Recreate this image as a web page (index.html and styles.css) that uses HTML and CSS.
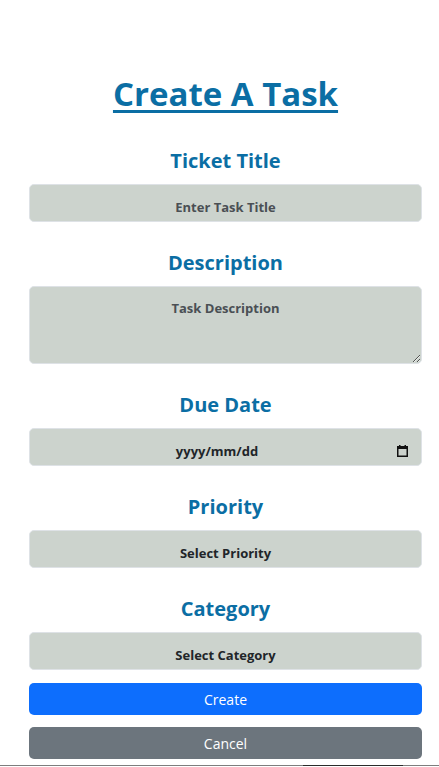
FILE: index.html
```html
<!DOCTYPE html>
<html lang="en">
<head>
<meta charset="utf-8">
<title>Create A Task</title>
<link rel="stylesheet" href="styles.css">
</head>
<body>
<main class="page">
  <h1 class="page-title">Create A Task</h1>
  <form class="task-form">
    <div class="field">
      <label class="field-label" for="title">Ticket Title</label>
      <input class="control" id="title" type="text" placeholder="Enter Task Title">
    </div>
    <div class="field">
      <label class="field-label" for="desc">Description</label>
      <textarea class="control control-area" id="desc" placeholder="Task Description"></textarea>
    </div>
    <div class="field">
      <label class="field-label" for="due">Due Date</label>
      <div class="date-wrap">
        <input class="control control-date" id="due" type="text" placeholder="yyyy/mm/dd">
        <svg class="date-icon" width="11" height="12" viewBox="0 0 11 12" aria-hidden="true">
          <rect x="2" y="0" width="1.5" height="2" fill="#111"/>
          <rect x="7.5" y="0" width="1.5" height="2" fill="#111"/>
          <rect x="0.75" y="1.75" width="9.5" height="9.5" fill="none" stroke="#111" stroke-width="1.5"/>
          <rect x="0" y="1" width="11" height="3" fill="#111"/>
        </svg>
      </div>
    </div>
    <div class="field">
      <label class="field-label" for="priority">Priority</label>
      <select class="control control-select" id="priority">
        <option>Select Priority</option>
      </select>
    </div>
    <div class="field field-last">
      <label class="field-label" for="category">Category</label>
      <select class="control control-select" id="category">
        <option>Select Category</option>
      </select>
    </div>
    <button type="button" class="btn btn-primary">Create</button>
    <button type="button" class="btn btn-secondary">Cancel</button>
  </form>
</main>
<div class="bottom-edge"></div>
</body>
</html>
```
FILE: styles.css
```css
html, body {
  margin: 0;
  padding: 0;
  overflow: hidden;
  background: #ffffff;
}

body {
  font-family: "Open Sans", "Liberation Sans", sans-serif;
  color: #212529;
}

.page {
  padding: 75px 17px 0 29px;
}

.page-title {
  margin: 0 0 36px 0;
  font-size: 33px;
  line-height: 38px;
  font-weight: 700;
  color: #0b6ea4;
  text-align: center;
  text-decoration: underline;
  text-decoration-thickness: 3px;
  text-underline-offset: 4px;
}

.task-form {
  display: flex;
  flex-direction: column;
}

.field {
  display: flex;
  flex-direction: column;
  margin-bottom: 29px;
}

.field-last {
  margin-bottom: 13px;
}

.field-label {
  display: block;
  font-size: 20px;
  line-height: 24px;
  font-weight: 700;
  color: #0b6ea4;
  text-align: center;
  margin-bottom: 11px;
}

.control {
  box-sizing: border-box;
  width: 100%;
  height: 38px;
  margin: 0;
  padding: 7px 12px 0 12px;
  border: 1px solid #dee2e6;
  border-radius: 5px;
  background: #ccd3cd;
  font-family: "Open Sans", "Liberation Sans", sans-serif;
  font-size: 13px;
  font-weight: 700;
  color: #212529;
  text-align: center;
  outline: none;
}

.control::placeholder {
  color: #4a4f54;
  opacity: 1;
}

.control-area {
  height: 78px;
  padding: 12px 12px 0 12px;
  line-height: 19px;
  resize: vertical;
}

.date-wrap {
  position: relative;
}

.control-date {
  padding-right: 29px;
}

.control-date::placeholder {
  color: #212529;
}

.date-icon {
  position: absolute;
  right: 14px;
  top: 17px;
}

.control-select {
  appearance: none;
  -webkit-appearance: none;
  text-align-last: center;
  padding: 7px 12px 0 12px;
}

.btn {
  box-sizing: border-box;
  width: 100%;
  height: 32px;
  margin: 0;
  padding: 0;
  border: none;
  border-radius: 5px;
  font-family: "Open Sans", "Liberation Sans", sans-serif;
  font-size: 14px;
  font-weight: 400;
  color: #ffffff;
  cursor: pointer;
}

.btn-primary {
  background: #0d6efd;
  margin-bottom: 12px;
}

.btn-secondary {
  background: #6c757d;
}

.bottom-edge {
  margin-top: 6px;
  height: 1px;
  background: linear-gradient(to right, #7d7d7d 0, #7d7d7d 303px, #2b2b2b 303px, #2b2b2b 403px, #7d7d7d 403px);
}
```
